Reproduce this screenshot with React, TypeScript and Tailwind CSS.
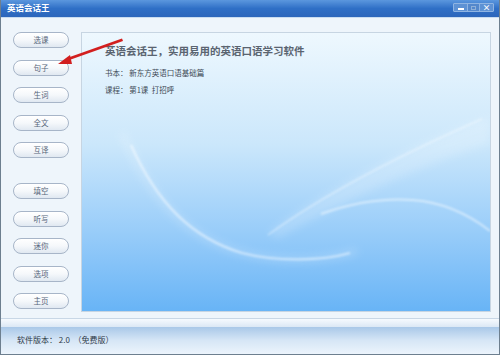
import React from 'react';

const groupA = ['选课', '句子', '生词', '全文', '互译'];
const groupB = ['填空', '听写', '迷你', '选项', '主页'];

const cjk = { fontFamily: '"Noto Sans CJK SC", "Liberation Sans", sans-serif' };

const NavButton: React.FC<{ label: string }> = ({ label }) => (
    <button
        className="w-[56px] h-[16px] rounded-full border border-[#a7b5c8] bg-linear-to-b from-white via-[#f5f8fb] to-[#e0e8f1] text-[#56657a] text-[7.5px] leading-none flex items-center justify-center shadow-[inset_0_1px_0_#ffffff]"
        style={cjk}
    >
        {label}
    </button>
);

// soft white arcs drawn over the panel background
const Swooshes: React.FC = () => (
    <svg className="absolute inset-0 w-full h-full" viewBox="0 0 408 278" preserveAspectRatio="none">
        <defs>
            <filter id="soft" x="-10%" y="-10%" width="120%" height="120%">
                <feGaussianBlur stdDeviation="1.2" />
            </filter>
            <filter id="softer" x="-10%" y="-10%" width="120%" height="120%">
                <feGaussianBlur stdDeviation="4" />
            </filter>
        </defs>
        <path d="M186 200 C 240 160, 320 115, 408 84 L408 110 C 330 135, 250 175, 196 205 Z" fill="#ffffff" opacity="0.18" filter="url(#softer)" />
        <path d="M40 100 C 70 170, 110 210, 170 222 C 210 230, 250 226, 275 218" fill="none" stroke="#ffffff" strokeWidth="6" opacity="0.22" filter="url(#softer)" />
        <path d="M49 112 C 75 170, 110 205, 160 220 C 195 229, 240 228, 268 220" fill="none" stroke="#ffffff" strokeWidth="2.2" opacity="0.5" filter="url(#soft)" />
        <path d="M186 202 C 230 170, 300 130, 400 86" fill="none" stroke="#ffffff" strokeWidth="1.5" opacity="0.4" filter="url(#soft)" />
        <path d="M239 181 C 270 170, 300 165, 330 167 C 360 169, 385 180, 408 198" fill="none" stroke="#ffffff" strokeWidth="2" opacity="0.5" filter="url(#soft)" />
    </svg>
);

const App: React.FC = () => {
    return (
        <div className="relative w-[500px] h-[355px] overflow-hidden flex flex-col bg-[#eef5fb] border-x border-b border-[#6d7f8f]" style={cjk}>
            {/* title bar */}
            <div className="h-[18px] shrink-0 flex items-start bg-linear-to-b from-[#5b97de] via-[#2f6fc6] to-[#2c66bb] border-b border-[#c9dcf0]">
                <span className="pl-[6px] pt-[3px] text-white text-[8.5px] font-bold leading-none">英语会话王</span>
                <div className="ml-auto mr-[5px] mt-[3px] flex h-[9px] border border-[#8fb4e2] rounded-[1px]">
                    <div className="w-[13px] bg-[#5e92d4] flex items-end justify-center pb-[1px]">
                        <div className="w-[6px] h-[2px] bg-white" />
                    </div>
                    <div className="w-[13px] bg-[#5488cc] border-x border-[#8fb4e2] flex items-center justify-center">
                        <div className="w-[5px] h-[4px] border border-[#8fb0d8]" />
                    </div>
                    <div className="w-[13px] bg-[#5e92d4] flex items-center justify-center text-white text-[8px] font-bold leading-none">×</div>
                </div>
            </div>

            {/* main */}
            <div className="flex flex-1">
                <div className="w-[80px] shrink-0 pl-[12px] pt-[14px] flex flex-col">
                    <div className="flex flex-col gap-[11.5px]">
                        {groupA.map((l) => <NavButton key={l} label={l} />)}
                    </div>
                    <div className="flex flex-col gap-[11.5px] mt-[25px]">
                        {groupB.map((l) => <NavButton key={l} label={l} />)}
                    </div>
                </div>
                <div className="pt-[14px] pb-[6px]">
                    <div className="relative w-[410px] h-[280px] border border-[#c7d5e2] bg-linear-to-b from-[#eef8fe] via-[#cbe7fb] via-40% to-[#68b4f6] overflow-hidden">
                        <Swooshes />
                        <div className="relative pl-[23px] pt-[13px] flex flex-col">
                            <span className="text-[10.5px] font-bold text-[#5a6470] leading-none">英语会话王，实用易用的英语口语学习软件</span>
                            <span className="mt-[12px] text-[7.5px] text-[#404a56] leading-none">书本：&nbsp;新东方英语口语基础篇</span>
                            <span className="mt-[10px] text-[7.5px] text-[#404a56] leading-none">课程：&nbsp;第1课&nbsp;&nbsp;打招呼</span>
                        </div>
                    </div>
                </div>
            </div>

            {/* footer */}
            <div className="h-[36px] shrink-0 flex flex-col">
                <div className="h-[1px] bg-[#c8d7e6]" />
                <div className="h-[8px] bg-linear-to-b from-[#f6fafe] to-[#dbe8f5]" />
                <div className="flex-1 flex items-center pl-[16px] bg-linear-to-b from-[#a9c8e8] via-[#d6e6f6] to-[#ecf4fc]">
                    <span className="text-[8px] text-[#2e3a48] leading-none pb-[1px]">软件版本：&nbsp;2.0&nbsp;&nbsp;（免费版）</span>
                </div>
            </div>

            {/* red arrow annotation */}
            <svg className="absolute left-0 top-0 pointer-events-none" width="500" height="355">
                <path d="M121 38.5 L122 41 L67 60.5 L66 58 Z" fill="#d21f1f" />
                <path d="M57 64 L69 55 L71 64 Z" fill="#d21f1f" />
            </svg>
        </div>
    );
};

export default App;
